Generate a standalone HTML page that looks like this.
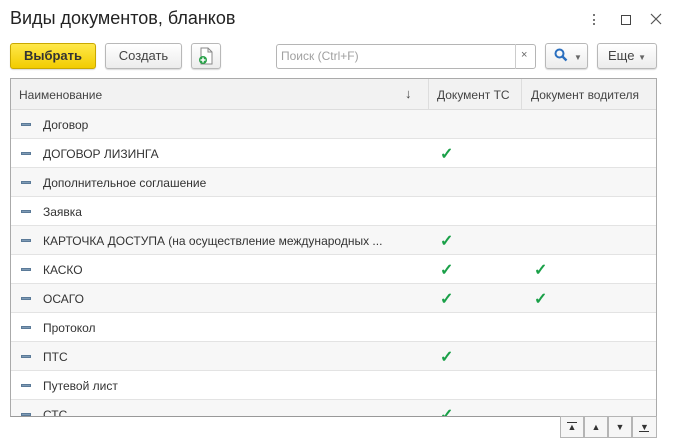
<!DOCTYPE html><html><head><meta charset="utf-8"><style>
*{box-sizing:border-box;margin:0;padding:0}
body{width:675px;height:448px;background:#fff;font-family:"Liberation Sans",sans-serif;font-size:12px;color:#333;position:relative;overflow:hidden}
.a{position:absolute}
.btn{position:absolute;top:43px;height:26px;border:1px solid #b8b8b8;border-radius:3px;background:linear-gradient(#fff,#ececec);box-shadow:0 1px 1px rgba(0,0,0,.15);font-size:13px;color:#444;text-align:center;line-height:24px}
.row{position:absolute;left:11px;width:645px;height:29px;border-bottom:1px solid #e3e3e3}
.row span{position:absolute;left:32px;top:8px;font-size:12px;color:#333;white-space:nowrap}
.row i{position:absolute;left:10px;top:13px;width:10px;height:3px;background:#7f9bb5;border:1px solid #5b7a98}
.ck{position:absolute;top:5px;color:#1aa048;font-size:16px;font-weight:bold}
.pg{position:absolute;top:416px;width:24px;height:22px;border:1px solid #b5b5b5;background:#f6f6f6}
</style></head><body>
<div class="a" style="left:10px;top:8px;font-size:18px;color:#222">Виды документов, бланков</div>
<div class="a" style="left:593px;top:14px;width:2px;height:11px;border-left:2px dotted #777"></div>
<div class="a" style="left:621px;top:15px;width:10px;height:10px;border:1.5px solid #444"></div>
<svg class="a" style="left:650px;top:13px" width="12" height="12" viewBox="0 0 12 12"><path d="M1 1l10 10M11 1L1 11" stroke="#555" stroke-width="1.2"/></svg>
<div class="btn" style="left:10px;width:86px;background:linear-gradient(#ffe84a,#f2cc00);border-color:#c9a800;color:#333;font-weight:bold">Выбрать</div>
<div class="btn" style="left:105px;width:77px">Создать</div>
<div class="btn" style="left:191px;width:30px">
<svg width="16" height="18" viewBox="0 0 16 18" style="margin-top:3px"><path d="M3 1h7l4 4v12H3z" fill="#fff" stroke="#888"/><path d="M10 1v4h4" fill="none" stroke="#888"/><circle cx="5" cy="13" r="4" fill="#2aa24a"/><path d="M5 10.5v5M2.5 13h5" stroke="#fff" stroke-width="1.5"/></svg></div>
<div class="a" style="left:276px;top:44px;width:260px;height:25px;border:1px solid #b5b5b5;border-radius:3px"></div>
<div class="a" style="left:281px;top:49px;font-size:12px;color:#a0a0a0">Поиск (Ctrl+F)</div>
<div class="a" style="left:515px;top:44px;width:1px;height:25px;background:#ccc"></div>
<div class="a" style="left:521px;top:49px;font-size:11px;color:#666">×</div>
<div class="btn" style="left:545px;width:43px;text-align:left;padding-left:8px"><svg width="14" height="14" viewBox="0 0 14 14" style="vertical-align:-2px"><circle cx="5.5" cy="5.5" r="4" fill="none" stroke="#2a6fbf" stroke-width="2"/><path d="M8.5 8.5l4 4" stroke="#2a6fbf" stroke-width="2.4"/></svg><span style="font-size:8px;color:#666;margin-left:6px">▼</span></div>
<div class="btn" style="left:597px;width:60px">Еще <span style="font-size:8px;color:#666">▼</span></div>
<div class="a" style="left:10px;top:78px;width:647px;height:339px;border:1px solid #aaa;border-bottom-color:#999"></div>
<div class="a" style="left:11px;top:79px;width:645px;height:31px;background:#f2f2f2;border-bottom:1px solid #ddd"></div>
<div class="a" style="left:428px;top:79px;width:1px;height:31px;background:#ddd"></div>
<div class="a" style="left:521px;top:79px;width:1px;height:31px;background:#ddd"></div>
<div class="a" style="left:19px;top:88px;color:#444">Наименование</div>
<div class="a" style="left:405px;top:86px;color:#444;font-size:13px">↓</div>
<div class="a" style="left:437px;top:88px;color:#444">Документ ТС</div>
<div class="a" style="left:531px;top:88px;color:#444">Документ водителя</div>
<div class="a" style="left:11px;top:110px;width:645px;height:306px;overflow:hidden">
<div class="row" style="top:0;left:0;background:#f7f7f7"><i></i><span>Договор</span></div>
<div class="row" style="top:29px;left:0"><i></i><span>ДОГОВОР ЛИЗИНГА</span><b class="ck" style="left:429px">✓</b></div>
<div class="row" style="top:58px;left:0;background:#f7f7f7"><i></i><span>Дополнительное соглашение</span></div>
<div class="row" style="top:87px;left:0"><i></i><span>Заявка</span></div>
<div class="row" style="top:116px;left:0;background:#f7f7f7"><i></i><span>КАРТОЧКА ДОСТУПА (на осуществление международных ...</span><b class="ck" style="left:429px">✓</b></div>
<div class="row" style="top:145px;left:0"><i></i><span>КАСКО</span><b class="ck" style="left:429px">✓</b><b class="ck" style="left:523px">✓</b></div>
<div class="row" style="top:174px;left:0;background:#f7f7f7"><i></i><span>ОСАГО</span><b class="ck" style="left:429px">✓</b><b class="ck" style="left:523px">✓</b></div>
<div class="row" style="top:203px;left:0"><i></i><span>Протокол</span></div>
<div class="row" style="top:232px;left:0;background:#f7f7f7"><i></i><span>ПТС</span><b class="ck" style="left:429px">✓</b></div>
<div class="row" style="top:261px;left:0"><i></i><span>Путевой лист</span></div>
<div class="row" style="top:290px;left:0;background:#f7f7f7"><i></i><span>СТС</span><b class="ck" style="left:429px">✓</b></div>
</div>
<div class="pg" style="left:560px;font-size:9px;text-align:center;line-height:20px;color:#333">▲</div>
<div class="pg" style="left:584px;font-size:9px;text-align:center;line-height:20px;color:#333">▲</div>
<div class="pg" style="left:608px;font-size:9px;text-align:center;line-height:20px;color:#333">▼</div>
<div class="pg" style="left:632px;width:25px;font-size:9px;text-align:center;line-height:20px;color:#333">▼</div>
<div class="a" style="left:567px;top:422px;width:10px;height:1px;background:#333"></div>
<div class="a" style="left:639px;top:431px;width:10px;height:1px;background:#333"></div>
</body></html>
